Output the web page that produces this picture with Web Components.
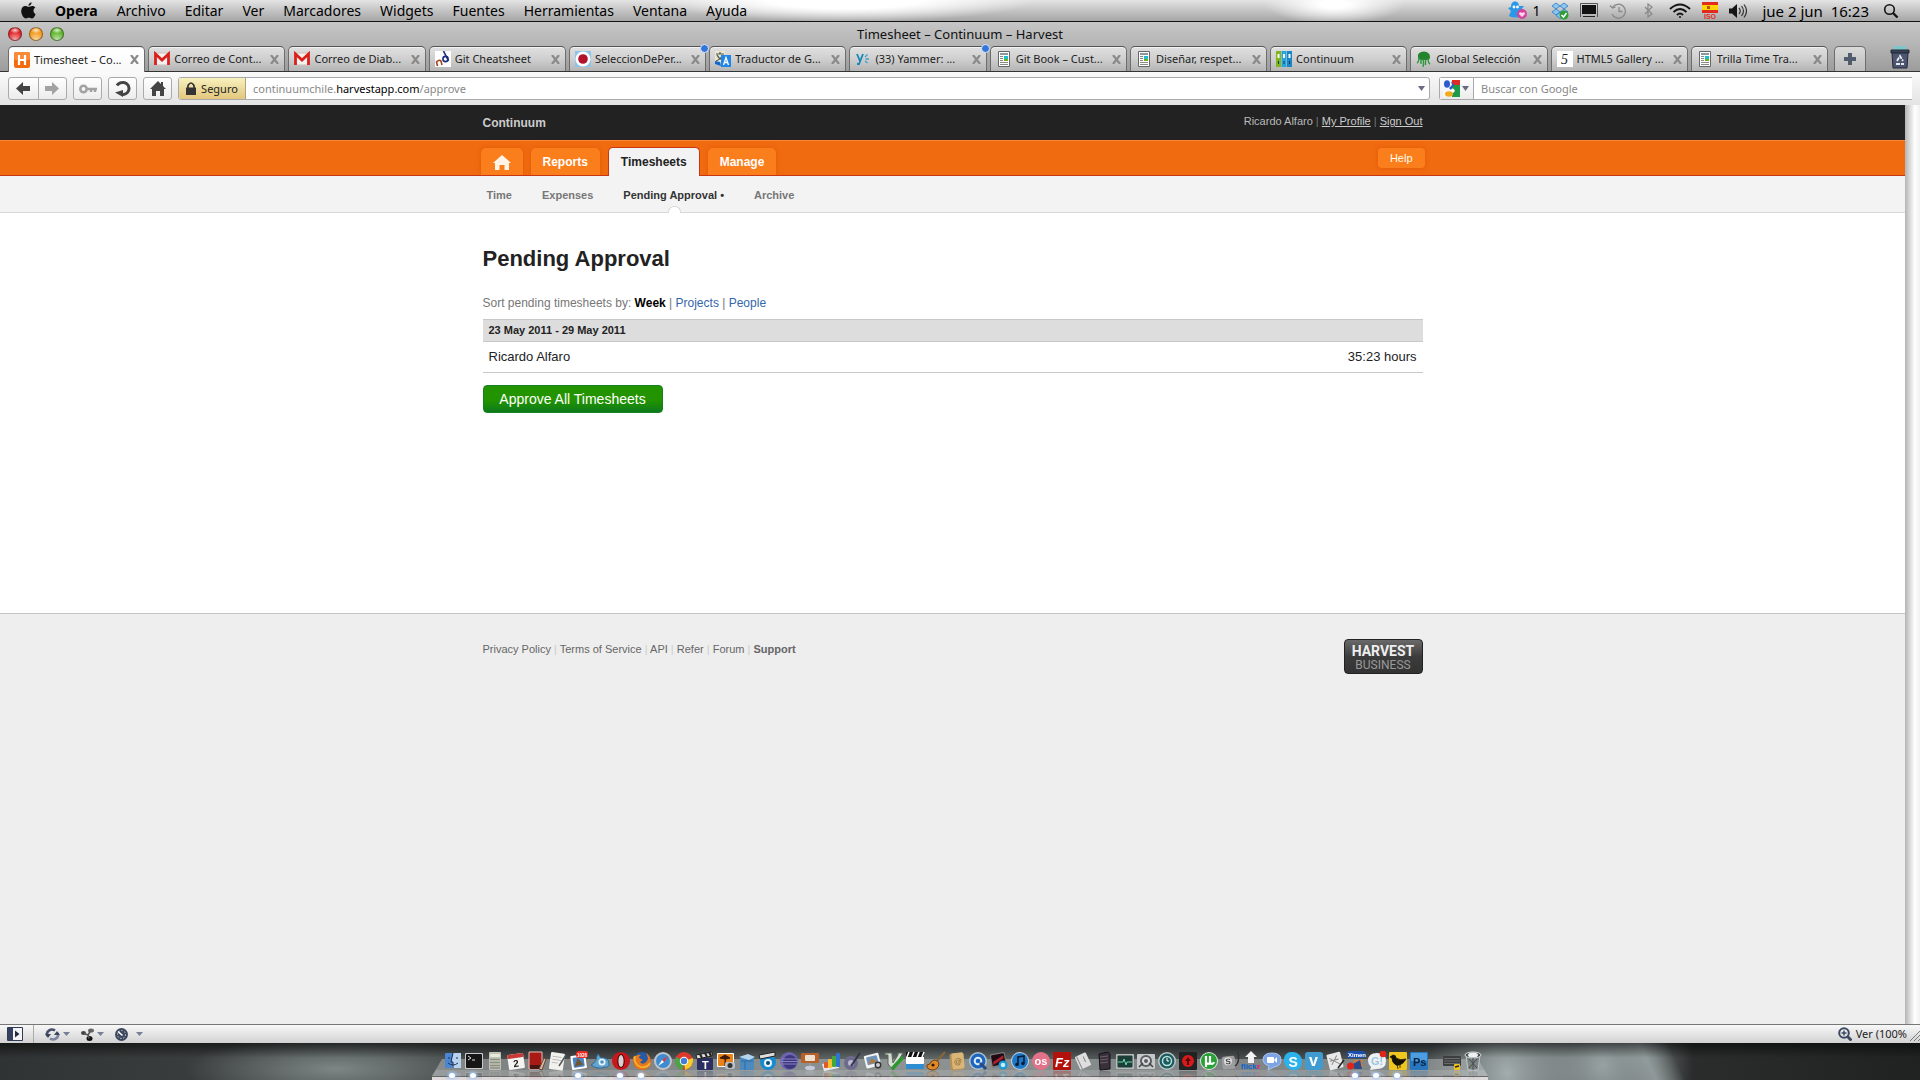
<!DOCTYPE html>
<html lang="es">
<head>
<meta charset="utf-8">
<title>Timesheet – Continuum – Harvest</title>
<style>
html,body{margin:0;height:100%}
body{display:flex;flex-direction:column;overflow:hidden;background:#1d1f1f;font-family:"Noto Sans","Open Sans",sans-serif}
mac-dock,mac-menubar{flex:none}
browser-window{flex:1;min-height:0}
</style>
</head>
<body>
<mac-menubar></mac-menubar>
<browser-window>
  <window-titlebar slot="chrome">Timesheet – Continuum – Harvest</window-titlebar>
  <browser-tabs slot="chrome">
    <browser-tab icon="harvest" active>Timesheet – Co...</browser-tab>
    <browser-tab icon="gmail">Correo de Cont...</browser-tab>
    <browser-tab icon="gmail">Correo de Diab...</browser-tab>
    <browser-tab icon="nd">Git Cheatsheet</browser-tab>
    <browser-tab icon="target" unread>SeleccionDePer...</browser-tab>
    <browser-tab icon="translate">Traductor de G...</browser-tab>
    <browser-tab icon="yammer" unread>(33) Yammer: ...</browser-tab>
    <browser-tab icon="page">Git Book – Cust...</browser-tab>
    <browser-tab icon="page">Diseñar, respet...</browser-tab>
    <browser-tab icon="binders">Continuum</browser-tab>
    <browser-tab icon="tree">Global Selección</browser-tab>
    <browser-tab icon="five">HTML5 Gallery ...</browser-tab>
    <browser-tab icon="page">Trilla Time Tra...</browser-tab>
  </browser-tabs>
  <browser-toolbar slot="chrome"></browser-toolbar>
  <harvest-header></harvest-header>
  <harvest-subnav></harvest-subnav>
  <timesheet-approval></timesheet-approval>
  <harvest-footer></harvest-footer>
  <status-bar slot="status"></status-bar>
</browser-window>
<mac-dock></mac-dock>

<script>
const define = (name, html, setup) => customElements.define(name, class extends HTMLElement {
  connectedCallback() {
    if (this.shadowRoot) return;
    const root = this.attachShadow({mode: 'open'});
    root.innerHTML = '<style>:host,*{box-sizing:border-box}svg{display:block}button{font:inherit;margin:0;padding:0;border:0;background:none;color:inherit}a{color:inherit;text-decoration:none}</style>' + html;
    if (setup) setup(this, root);
  }
});

/* ---------- menu bar ---------- */
define('mac-menubar', `
<style>
:host{display:flex;align-items:center;justify-content:space-between;height:22px;padding:0 20px 0 21px;font-size:14px;line-height:20px;color:#000;border-bottom:1px solid #111;
background:radial-gradient(ellipse 190px 22px at 44% 0,#fff 40%,transparent),radial-gradient(ellipse 70px 20px at 69.5% 20%,#fff 20%,transparent),linear-gradient(#e4e4e4,#c4c4c4 50%,#a6a6a6)}
nav,div{display:flex;align-items:center}
nav{gap:19px}
b{font-weight:700}
div{gap:11px}
.n{display:flex;gap:4px;align-items:center}
time{white-space:pre;font-size:15px;padding-left:4px}
</style>
<nav>
<svg width="15" height="17" viewBox="0 0 15 17"><path d="M10.600.2c.1 1.700-1.300 3.500-3.100 3.600C7.300 2.100 8.900.4 10.600.2zM14.600 12.200c-.8 2.200-2.200 4.300-3.800 4.300-1.100 0-1.600-.7-2.900-.7-1.300 0-1.800.7-2.900.7C2.500 16.500.2 12.400.2 9 .2 5.900 2.200 4 4.400 4c1.300 0 2.300.8 3.200.8.900 0 2.100-.9 3.700-.9 1.200 0 2.400.6 3.100 1.700-2.800 1.700-2.300 5.400.2 6.600z" fill="#111"/></svg>
<b>Opera</b><span>Archivo</span><span>Editar</span><span>Ver</span><span>Marcadores</span><span>Widgets</span><span>Fuentes</span><span>Herramientas</span><span>Ventana</span><span>Ayuda</span>
</nav>
<div>
<span class="n"><svg width="20" height="19" viewBox="0 0 20 19"><path d="M7 .5C10 .5 11 3 11 5l5 0-3 4 4 6c-4 2-12 2-16 0l2-5-3-3 3-1c0-3 1-5.500 4-5.500z" fill="#2a97e8"/><circle cx="6" cy="6" r="1.400" fill="#fff"/><circle cx="9.500" cy="6" r="1.400" fill="#fff"/><circle cx="14" cy="13" r="5" fill="#d3459b"/><path d="M14 16l-3-3c0-2 2-2 3-1 1-1 3-1 3 1z" fill="#ffd6ec"/></svg>1</span>
<svg width="18" height="18" viewBox="0 0 18 18"><path d="M5 1l4 3-4 3-4-3zM13 1l4 3-4 3-4-3zM5 7l4 3-4 3-4-3zM13 7l4 3-4 3-4-3zM9 10.500l4 3-4 3-4-3z" fill="#8cc6f2" stroke="#2e7cc0" stroke-width=".8"/><circle cx="13" cy="13" r="4.500" fill="#2f9e35"/><path d="M10.500 13l2 2 3-4" stroke="#fff" stroke-width="1.500" fill="none"/></svg>
<svg width="18" height="15" viewBox="0 0 18 15"><path d="M.5 14V.500h17V14" fill="none" stroke="#555"/><rect x="2" y="2" width="14" height="9" fill="#111"/><path d="M3 13.500h12" stroke="#222"/></svg>
<svg width="18" height="16" viewBox="0 0 18 16" fill="none" stroke="#888" stroke-width="1.300"><path d="M3.500 4.500A7 7 0 1 1 3 11"/><path d="M10 4v4.500h3.500M1 2.500l2.500 2.500L6.500 4"/></svg>
<svg width="20" height="15" viewBox="0 0 20 15" fill="none" stroke="#888" stroke-width="1.200"><path d="M7 4l7 7-4 3V1l4 3-7 7"/></svg>
<svg width="22" height="16" viewBox="0 0 22 16" fill="none" stroke="#151515" stroke-width="2"><path d="M1 6q10-9 20 0M4.500 9q6.500-6 13 0M8 12q3-3 6 0"/><circle cx="11" cy="14" r="1" fill="#151515" stroke="none"/></svg>
<svg width="16" height="18" viewBox="0 0 16 18"><path fill="#e22b1c" d="M0 0h16v11H0z"/><path fill="#ffd400" d="M0 3h16v5H0z"/><path fill="#b4551d" d="M5 4h3v3H5z"/><text x="2" y="17" font-size="7" font-weight="700" font-family="Liberation Sans" fill="#e22b1c">ISO</text></svg>
<svg width="18" height="14" viewBox="0 0 18 14"><path d="M0 4.500h3L8 0v14L3 9.500H0z" fill="#151515"/><path d="M10 4q2.500 3 0 6M12.500 2q4 5 0 10M15 .5q5 6.500 0 13" fill="none" stroke="#333" stroke-width="1.200"/></svg>
<time>jue 2 jun  16:23</time>
<svg width="20" height="16" viewBox="0 0 20 16" fill="none" stroke="#151515" stroke-width="1.600"><circle cx="9.500" cy="6.500" r="4.800"/><path d="M13 10l4.500 4.500" stroke-width="2.400"/></svg>
</div>`);

/* ---------- window shell ---------- */
define('browser-window', `
<style>
:host{display:flex;flex-direction:column;background:#c3c3c3}
.view{flex:1;display:flex;min-height:0}
main{flex:1;display:flex;flex-direction:column;min-width:0;background:#eee;font-family:"Liberation Sans",Arial,sans-serif}
.gutter{width:15px;background:linear-gradient(90deg,#b4b4b4,#e8e8e8 45%,#fff 65%,#f0f0f0)}
::slotted(harvest-footer){flex:1}
</style>
<slot name="chrome"></slot>
<div class="view"><main><slot></slot></main><div class="gutter"></div></div>
<slot name="status"></slot>`);

define('window-titlebar', `
<style>
:host{display:grid;grid-template-columns:1fr auto 1fr;align-items:center;height:24px;padding:0 8px;font-size:13px;line-height:20px;color:#111;background:linear-gradient(#c6c6c6,#b4b4b4)}
div{display:flex;gap:7px}
button{width:14px;height:14px;border-radius:50%;border:1px solid #0006;background:radial-gradient(circle at 50% 95%,#fff9,transparent 60%),radial-gradient(ellipse 5px 3px at 50% 20%,#fffc,transparent),var(--c)}
</style>
<div><button style="--c:#e0262a" aria-label="Cerrar"></button><button style="--c:#f39a1d" aria-label="Minimizar"></button><button style="--c:#5fb52c" aria-label="Ampliar"></button></div>
<span><slot></slot></span>`);

const favicons = {
harvest:'<rect width="16" height="16" rx="2" fill="#f26c0d"/><rect width="16" height="8" rx="2" fill="#f98a36"/><path d="M5 3v10M11 3v10M5 8h6" stroke="#fff" stroke-width="2.200"/>',
gmail:'<path d="M0 2h16v12H0z" fill="#f4f1ef" stroke="#c9c0bd"/><path d="M1.500 14V3L8 9l6.500-6v11" fill="none" stroke="#d8201c" stroke-width="2.800"/>',
nd:'<path d="M0 0h16v16H0z" fill="#fff"/><path d="M2.500 15L1.500 11q3-3 4.500-1l1 4" fill="none" stroke="#a3431d" stroke-width="1.600"/><circle cx="10.500" cy="8" r="2.600" fill="none" stroke="#1c2f7c" stroke-width="1.600"/><path d="M8.500 0l5 10" stroke="#1c2f7c" stroke-width="1.600"/>',
target:'<path d="M0 0h16v16H0z" fill="#8fc4e8"/><circle cx="8" cy="8" r="7.500" fill="#fff"/><circle cx="8" cy="8" r="4.800" fill="#b1142a"/>',
translate:'<path d="M0 0h10v11H0z" fill="#ece6cf"/><path d="M1 3h8M5 1v2M8 4Q6 8 1 10M2 4q2 4 6 5" stroke="#4c5a55" stroke-width="1.200" fill="none"/><path d="M6 4h10v12H6z" fill="#1e86e6"/><path d="M8.500 14L11 6.500 13.500 14M9.500 11.500h3" stroke="#fff" stroke-width="1.300" fill="none"/><path d="M0 10l5 1 1 4-6-2z" fill="#1267c9"/>',
yammer:'<path d="M2 3l3 7M8 3L4 13H2" stroke="#1787b5" stroke-width="1.800" fill="none"/><path d="M10 6l2.500-2.500M10.500 8H14M10 10l2.500 2" stroke="#3aa2cc" stroke-width="1.300"/>',
page:'<path d="M2.500.500h11v15h-11z" fill="#fff" stroke="#666"/><path d="M4 2h8v2H4z" fill="#8b9a9c"/><path d="M8 5h4v3H8z" fill="#1bbdd0"/><path d="M8 8h4v2H8z" fill="#74b11f"/><path d="M4 5.500h3M4 7.500h3M4 9.500h3M4 11.500h8M4 13.500h8" stroke="#888"/>',
binders:'<path d="M0 0h5v16H0z" fill="#7fb51e"/><path d="M5.500 0h5v16h-5z" fill="#27a4dc"/><path d="M11 0h5v16h-5z" fill="#1a86c6"/><path d="M1.500 3h2v4h-2zM7 3h2v4H7zM12.500 3h2v4h-2z" fill="#fff"/><path d="M2.500 10v3M8 10v3M13.500 10v3" stroke="#0c3f66"/>',
tree:'<path d="M2 6q-1-5 6-5.500Q14 1 14 6q0 3-3 3H6Q2 9 2 6z" fill="#24842d"/><path d="M3 6q0 5-2 6M7 8q1 5 0 8M12 7q0 5 2 6M5 8v5M9.500 8v6" stroke="#2d9438" stroke-width="1.400" fill="none"/>',
five:'<path d="M0 0h16v16H0z" fill="#fff"/><text x="4" y="13" font-size="14" font-style="italic" font-family="Liberation Serif" fill="#222">5</text>'
};

define('browser-tabs', `
<style>
:host{display:flex;height:26px;padding:0 8px;background:linear-gradient(#b4b4b4,#9c9c9c);font-size:11px;border-bottom:1px solid #333}
.tabs{flex:1;display:flex;gap:3px;min-width:0}
.plus{display:grid;place-items:center;width:32px;height:25px;margin-left:6px;border:1px solid #6d6d6d;border-bottom:0;border-radius:5px 5px 0 0;background:linear-gradient(#dadada,#bcbcbc)}
.bin{width:46px;display:flex;justify-content:flex-end}
</style>
<div class="tabs"><slot></slot></div>
<button class="plus" aria-label="Nueva pestaña"><svg width="12" height="12"><path d="M6 0v12M0 6h12" stroke="#505b6d" stroke-width="4"/></svg></button>
<button class="bin" aria-label="Papelera"><svg width="22" height="23" viewBox="0 0 22 23"><path d="M4 0h12v4H4z" fill="#7fc6cb"/><path d="M1 4h18v3H1z" fill="#3a4257" stroke="#222a3b"/><path d="M2 7h16l-1 15H3z" fill="#4d566e" stroke="#222a3b"/><path d="M7 15l3-5 3 5M6 18h8" stroke="#e8edf5" stroke-width="1.800" fill="none" stroke-dasharray="4 1"/></svg></button>`);

define('browser-tab', `
<style>
:host{flex:1 1 0;min-width:0;position:relative;display:flex;align-items:center;gap:4px;height:25px;padding:0 5px;color:#222;border:1px solid #6d6d6d;border-top-color:#555;border-bottom:0;border-radius:5px 5px 0 0;background:linear-gradient(#e0e0e0,#cfcfcf 50%,#b4b4b4);box-shadow:inset 0 1px #f2f2f2}
:host([active]){background:linear-gradient(#fff,#f8f8f8);height:26px}
svg{flex:none}
span{flex:1;white-space:nowrap;line-height:16px}
i{display:none;position:absolute;right:-4px;top:-3px;width:9px;height:9px;border-radius:50%;border:1px solid #dfe9f8;background:#3475dc}
:host([unread]) i{display:block}
</style>
<svg class="fav" width="16" height="16" viewBox="0 0 16 16"></svg><span><slot></slot></span>
<button aria-label="Cerrar pestaña"><svg width="9" height="9"><path d="M1 0l7 9M8 0L1 9" stroke="#8a8a8a" stroke-width="2.200"/></svg></button><i></i>`,
(host, root) => { root.querySelector('.fav').innerHTML = favicons[host.getAttribute('icon')]; });

define('browser-toolbar', `
<style>
:host{display:flex;align-items:center;height:33px;padding:0 8px;font-size:11px;color:#222;background:linear-gradient(#fafafa,#e3e3e3)}
button{display:grid;place-items:center;width:29px;height:23px;border:1px solid #aaa;border-radius:3px;background:linear-gradient(#fff,#ececec)}
.b{margin-right:6px}
.back{border-radius:3px 0 0 3px;width:31px;margin-right:-1px}
.fwd{border-radius:0 3px 3px 0}
.field{display:flex;align-items:center;height:23px;border:1px solid #a9a9a9;background:#fff}
.url{flex:1;border-radius:3px}
.secure{display:flex;gap:5px;width:67px;height:21px;border:0;border-right:1px solid #b0a477;border-radius:2px 0 0 2px;background:linear-gradient(#f7f1bd,#e3c67d);align-items:center;justify-content:center}
.addr{padding-left:7px;color:#888;white-space:nowrap}
.addr b{font-weight:400;color:#000}
input{flex:1;min-width:0;border:0;outline:0;padding:0 7px;height:19px;font:inherit;background:none}
input::placeholder{color:#888;opacity:1}
.search{width:473px;margin-left:9px;border-right:0;border-radius:3px 0 0 3px}
.engine{display:flex;gap:2px;justify-content:center;align-items:center;width:34px;height:21px;border:0;border-right:1px solid #aaa;border-radius:0;background:linear-gradient(#fff,#ececec)}
</style>
<button class="back" aria-label="Atrás"><svg width="15" height="13"><path d="M0 6.500L7 0v4h7v5H7v4z" fill="#444"/></svg></button>
<button class="fwd b" aria-label="Adelante"><svg width="15" height="13"><path d="M14 6.500L7 0v4H0v5h7v4z" fill="#a2a2a2"/></svg></button>
<button class="b" aria-label="Contraseñas"><svg width="18" height="10" fill="none" stroke="#a2a2a2" stroke-width="2.500"><circle cx="4.500" cy="5" r="3.200"/><path d="M8 5h10M12 5v3M16 5v3"/></svg></button>
<button class="b" aria-label="Recargar"><svg width="17" height="16"><path d="M3 4.500q2-3 5.500-3a6 6 0 0 1 1 12H8" fill="none" stroke="#444" stroke-width="3"/><path d="M9 16V9L1 11.500z" fill="#444"/></svg></button>
<button class="b" aria-label="Inicio"><svg width="16" height="15"><path d="M8 0l3 3V1h2v4l3 3h-2v7h-4v-5H6v5H2V8H0z" fill="#444"/></svg></button>
<label class="field url"><span class="secure"><svg width="10" height="13"><path d="M0 5.500h10V13H0z" fill="#333"/><path d="M2 6V3.500q3-5 6 0V6" fill="none" stroke="#333" stroke-width="1.700"/></svg>Seguro</span><span class="addr">continuumchile.<b>harvestapp.com</b>/approve</span><input aria-label="Dirección"><svg width="14" height="5"><path d="M3 0h7L6.500 5z" fill="#6a6a82"/></svg></label>
<label class="field search"><span class="engine"><svg width="17" height="17" viewBox="0 0 17 17"><path d="M9 0h8v17H9z" fill="#1d9b4a"/><path d="M9 0h8v5H9z" fill="#dd2b26"/><path d="M0 0h9v17H0z" fill="#f5f7fc"/><ellipse cx="4" cy="4" rx="3" ry="3.800" fill="#2c5bd0"/><path d="M6 9q5-2 6 2l-3 3z" fill="#fff"/><ellipse cx="6" cy="14" rx="4" ry="2.700" fill="#f2aa1d"/><path d="M8 1l3 4-3 5-2-2 3-3z" fill="#2c5bd0"/></svg><svg width="8" height="5"><path d="M0 0h7L3.500 5z" fill="#6a6a82"/></svg></span><input placeholder="Buscar con Google" aria-label="Buscar con Google"></label>`);

/* ---------- Harvest pages ---------- */
define('harvest-header', `
<style>
:host{display:block;font-size:12px}
.top{background:#222;color:#ccc}
.in{width:944px;max-width:100%;margin:0 auto;display:flex;justify-content:space-between}
.top .in{height:35px;padding:0 2px}
.top b{line-height:36px}
.top span{font-size:11px;line-height:33px;color:#777}
.top span em{font-style:normal;color:#bbb}
.top a{color:#ccc;text-decoration:underline}
.bar{height:36px;background:#f06a10;border-top:1px solid #fb8634;border-bottom:1px solid #c83712}
nav{display:flex;align-items:flex-end;gap:8px;height:35px}
nav a{display:flex;align-items:center;height:28px;padding:0 12px;color:#fff;font-weight:700;background:#fb7e1d;border-radius:5px 5px 0 0;box-shadow:0 0 4px #dd5200aa;clip-path:inset(-5px -5px 1px -5px)}
nav a.on{height:29px;color:#222;background:#f3f3f3;border:1px solid #c83712;border-bottom:0;box-shadow:none;clip-path:none}
.help{height:20px;margin-top:7px;padding:0 12px;font-size:11px;line-height:20px;color:#ffe;background:#fb7e1d;border-radius:4px;box-shadow:0 0 4px #dd5200aa}
</style>
<div class="top"><div class="in"><b>Continuum</b><span><em>Ricardo Alfaro</em> | <a href="#">My Profile</a> | <a href="#">Sign Out</a></span></div></div>
<div class="bar"><div class="in"><nav><a href="#" aria-label="Home"><svg width="18" height="15"><path d="M9 0l9 8h-2v7h-4.500v-5h-5v5H2V8H0z" fill="#fff4e6"/></svg></a><a href="#">Reports</a><a href="#" class="on">Timesheets</a><a href="#">Manage</a></nav><a class="help" href="#">Help</a></div></div>`);

define('harvest-subnav', `
<style>
:host{display:block;background:#f3f3f3;border-bottom:1px solid #d8d8d8}
nav{display:flex;gap:30px;width:940px;max-width:100%;margin:0 auto;padding-left:4px;font-size:11px;font-weight:700;line-height:38px;height:36px;color:#777}
.on{position:relative;height:36px;color:#333}
.on::after{content:"";position:absolute;left:50%;bottom:-1px;margin-left:-6px;width:11px;height:6px;background:#fff;border:1px solid #d8d8d8;border-bottom:0;border-radius:6px 6px 0 0}
</style>
<nav><a href="#">Time</a><a href="#">Expenses</a><a href="#" class="on">Pending Approval •</a><a href="#">Archive</a></nav>`);

define('timesheet-approval', `
<style>
:host{display:block;min-height:400px;background:#fff;color:#222}
section{width:940px;max-width:100%;margin:0 auto;padding-top:32px}
h1{margin:0;font-size:22px;line-height:28px}
p{margin:22px 0 8px;font-size:12px;line-height:16px;color:#777}
p b{color:#000}
p a{color:#36a;}
table{width:100%;border-collapse:collapse;font-size:13px}
th{height:22px;padding:0 6px 2px;text-align:left;font-size:11px;background:#ddd;border:solid #c8c8c8;border-width:1px 0}
td{height:31px;padding:0 6px 2px;border-bottom:1px solid #c8c8c8}
td+td{text-align:right}
button{margin-top:12px;width:180px;height:28px;font-size:14px;line-height:25px;color:#fff;border:1px solid #178021;border-radius:4px;background:linear-gradient(#239400 55%,#0c7a1c)}
</style>
<section>
<h1>Pending Approval</h1>
<p>Sort pending timesheets by: <b>Week</b> | <a href="#">Projects</a> | <a href="#">People</a></p>
<table><thead><tr><th colspan="2">23 May 2011 - 29 May 2011</th></tr></thead><tbody><tr><td>Ricardo Alfaro</td><td>35:23 hours</td></tr></tbody></table>
<button>Approve All Timesheets</button>
</section>`);

define('harvest-footer', `
<style>
:host{display:block;background:#eee;border-top:1px solid #c4c4c4;color:#666}
footer{display:flex;justify-content:space-between;width:940px;max-width:100%;margin:0 auto;padding-top:25px;font-size:11px}
nav{line-height:20px;color:#ccc}
nav a{color:#666}
.badge{width:79px;height:35px;padding-top:4px;border:1px solid #222;border-radius:4px;background:linear-gradient(#6a6a6a,#3c3c3c 50%,#333);text-align:center}
.badge b{display:block;font:700 14px/15px Roboto,"Liberation Sans",sans-serif;color:#eee}
.badge span{display:block;font:12px/12px Roboto,"Liberation Sans",sans-serif;color:#999}
</style>
<footer><nav><a href="#">Privacy Policy</a> | <a href="#">Terms of Service</a> | <a href="#">API</a> | <a href="#">Refer</a> | <a href="#">Forum</a> | <a href="#"><b>Support</b></a></nav>
<div class="badge"><b>HARVEST</b><span>BUSINESS</span></div></footer>`);

define('status-bar', `
<style>
:host{display:flex;align-items:center;justify-content:space-between;height:19px;padding-left:7px;border-top:1px solid #777;background:linear-gradient(#f8f8f8,#d2d2d2);font-size:11px;line-height:16px;color:#222}
div{display:flex;align-items:center}
.sep{width:1px;height:18px;background:#aaa;margin:0 11px 0 10px}
button{display:flex;align-items:center;gap:3px;margin-right:11px}
.zoom{gap:4px;margin:0 3px 0 0;white-space:nowrap}
.zoom svg{flex:none}
</style>
<div><button style="margin:0" aria-label="Paneles"><svg width="16" height="14"><path d="M.500.500h15v13H.500z" fill="#f4f4f8" stroke="#2f3b57"/><path d="M1 1h5v12H1z" fill="#37415f"/><path d="M8 3.500L12.500 7 8 10.500z" fill="#222b42"/></svg></button><span class="sep"></span>
<button aria-label="Sincronizar"><svg width="15" height="13" fill="none" stroke="#46506a" stroke-width="2.600"><path d="M2.500 8A5 4.500 0 0 1 10 2.500"/><path d="M12.500 5A5 4.500 0 0 1 5 10.500" stroke="#7c86a0"/><path d="M0 6h6L3 10zM9 7h6l-3-4z" fill="#3a445c" stroke="none"/></svg><svg width="7" height="4"><path d="M0 0h7L3.500 4z" fill="#758098"/></svg></button>
<button aria-label="Unite"><svg width="13" height="13"><ellipse cx="2.500" cy="5" rx="2.500" ry="2" fill="#444"/><ellipse cx="10" cy="2.500" rx="3" ry="2" fill="#666"/><ellipse cx="8.500" cy="10.500" rx="3" ry="2.500" fill="#111"/><path d="M3 5.500l4 1.500 2.500-4M7 6.500l1 4" stroke="#555" stroke-width="1.600" fill="none"/></svg><svg width="7" height="4"><path d="M0 0h7L3.500 4z" fill="#758098"/></svg></button>
<button style="gap:8px" aria-label="Turbo"><svg width="13" height="13"><circle cx="6.500" cy="6.500" r="6.500" fill="#3c475e"/><circle cx="6.500" cy="6.500" r="4" fill="none" stroke="#cbd2de" stroke-dasharray="1.500 1.500"/><path d="M3 3.500l4.500 4" stroke="#fff" stroke-width="1.600"/></svg><svg width="7" height="4"><path d="M0 0h7L3.500 4z" fill="#758098"/></svg></button></div>
<div><button class="zoom"><svg width="14" height="14" fill="none" stroke="#3d4863" stroke-width="2"><circle cx="6" cy="6" r="4.800"/><path d="M6 3.500v5M3.500 6h5" stroke-width="1.500"/><path d="M9.500 9.500l4 4" stroke-width="3"/></svg>Ver (100%</button><svg width="10" height="16" stroke="#777"><path d="M0 15L10 5M4 15l6-6M8 15l2-2"/></svg></div>`);

/* ---------- dock ---------- */
const R = (f, x=1, y=1, w=18, h=18, r=1) => `<rect x="${x}" y="${y}" width="${w}" height="${h}" rx="${r}" fill="${f}"/>`;
const C = (f, x=10, y=10, r=9) => `<circle cx="${x}" cy="${y}" r="${r}" fill="${f}"/>`;
const P = (d, f='none', s='none', w=1) => `<path d="${d}" fill="${f}" stroke="${s}" stroke-width="${w}"/>`;
const T = (t, x, y, s, f='#fff', e='') => `<text x="${x}" y="${y}" font-size="${s}" fill="${f}" font-family="Liberation Sans" font-weight="700" ${e}>${t}</text>`;
const dock = [
 ['Finder*', R('#4d86d0',2,2,16,15)+P('M10 2h8v15h-9l1-6H8z','#b9d2ee')+P('M6 6v2M14 6v2M5 12q5 4 10 0M10 2L8 11h2v6','none','#15305c')],
 ['Terminal*', R('#c9c9c9',1,2,18,16)+R('#161616',2,3,16,14)+P('M4 5l3 2-3 2M8 9h3','none','#ddd')],
 ['Calculadora', R('#c2c3b8',4,1,12,18)+R('#e5ebd8',5,3,10,3)+P('M5 8.500h10M5 11.500h10M5 14.500h10M5 17h10','none','#8c8e80',1.6)],
 ['iCal', `<g transform="rotate(-8 10 10)">${R('#f4f4f2',2,3,16,15)+R('#c93a36',2,3,16,4)+T('2',7,16,10,'#222')}</g>`],
 ['Photo Booth', P('M2 1h13v17H2z','#a91a14','#e5c0ba')+P('M3 14h11v4H3z','#471512')+P('M12 18l5-11 2 1-4 11z','#d9b7a0','#62443a')],
 ['TextEdit', `<g transform="rotate(8 10 10)">${R('#f1f1ed',2,2,14,17)+P('M4 6h9M4 9h9M4 12h6','none','#bbb')}</g>`+P('M18 4l-7 11','none','#555',1.5)],
 ['Mail*', `<g transform="rotate(-8 10 10)">${R('#fff',2,4,15,14)+R('#4b82bf',4,6,11,10)+P('M5 15l4-8 5 7z','#6e5636')}</g>`+R('#ee2a20',7,0,12,7,3)+T('1026',8,6,4.5)],
 ['MAMP', P('M1 14q3-1 5-5 1-5 2-6l3 4q8-1 8 6 0 4-4 3-7 3-14-2z','#63a5cf','#2d6d9b')+C('#e8f4fb',12,11,3.5)+C('#4d93c2',12,11,1.8)],
 ['Opera*', C('#c9171b')+'<ellipse cx="10" cy="10" rx="3.700" ry="7" fill="#4c0c0f"/><ellipse cx="10" cy="10" rx="2.600" ry="6" fill="#d9d0d0"/>'],
 ['Firefox*', C('#245aa8')+P('M1 6Q0 19 11 19q8-1 8-9-1-6-5-8 3 5 1 8-4 5-7 1l3-2-4-2q0-2 2-3-3-1-5 1z','#e77718')+P('M3 5q-2 8 6 11 6 1 9-4','none','#f7b733',1.5)],
 ['Safari', C('#bfc5ca')+C('#3d8bd0',10,10,7)+P('M15 5l-4 6-2-2z','#e33')+P('M5 15l4-6 2 2z','#fff')],
 ['Chrome', C('#dd3a2c')+P('M10 10L2 6q-3 6 2 11 3 2 5 2z','#4ba446')+P('M10 10l9-3q1 9-8 12z','#f8cd2b')+C('#fff',10,10,4.2)+C('#3f7ed5',10,10,3.2)],
 ['MovieText', R('#2a2e61',2,7,16,12)+P('M1 4l16-3v4L2 8z','#ddd','#222')+P('M5 3l2 4M10 2l2 4M14 1l2 4','none','#222',2)+T('T',7,18,11)],
 ['iPhoto', R('#fff',1,2,17,14)+R('#e98218',2,3,15,12)+P('M9 15V8L4 7l5-3 5 3-4 1','#3c1b08','#3c1b08')+R('#b7bec6',9,11,10,7,2)+C('#333',14,14.5,2.5)],
 ['Xcode', R('#4a8ac1',3,7,14,12)+P('M2 6l9-3 7 3-6 3z','#b3d6ef')+P('M4 10h12M8 10v9','none','#2f6ca2')],
 ['DVD', C('#168bd2',10,11,8)+P('M1 4l16-3v4L2 8z','#ddd','#222')+C('#e9f5fc',10,12,4)+C('#0b4a77',10,12,2)],
 ['Eclipse', C('#6b64ae')+C('#3d3780',11,11,7)+P('M2 8h16M1.500 10.500h17M2 13h16','none','#8a84c0')],
 ['Keynote', R('#b7612a',1,2,18,10)+R('#ece0d2',5,4,10,6)+P('M10 12v4','none','#999',2)+'<ellipse cx="10" cy="17" rx="5" ry="2.200" fill="#c4c9da"/>'],
 ['Numbers', P('M1 13l17-3v7L3 20z','#e8e8e8')+R('#e3582a',3,11,4,6)+R('#f2c230',7,8,4,9)+R('#43a83c',11,5,4,11)+R('#2f75cf',15,2,4,14)],
 ['iMovie', C('#6d6a8d',9,12,7)+C('#b9b8ce',9,12,3)+P('M18 2L9 15','none','#33334c',2)],
 ['Preview', `<g transform="rotate(-14 10 10)">${R('#f3f3f3',2,3,15,13)+R('#6f94ba',4,5,11,8)+P('M5 12l4-5 5 5z','#ad7a45')}</g>`+C('#333',15,14,3.4)+C('#ccd',15,14,2)],
 ['MacVim', P('M1 2h7v2L9 12l5-8V2h5L9 19 4 13V4H1z','#d8dcd8','#596b58')+P('M19 6L8 18','none','#2e962e',3.5)],
 ['Clapper', R('#fff',1,2,18,11)+R('#111',1,1,18,5)+P('M4 1L2 6M9 1L7 6M14 1l-2 5M19 1l-2 5','none','#fff',1.5)+R('#2f8ed1',1,13,18,5)],
 ['GarageBand', P('M19 1L9 12','none','#8a6539',2)+P('M9 9q4 1 4 4-1 6-7 6-6-1-5-5 3 0 4-3 2-2 4-2z','#e08a2a','#723c0c')+C('#301b0a',7,14,1.6)],
 ['Agenda', `<g transform="rotate(-5 10 10)">${R('#b89056',3,2,14,17,2)+R('#d9b678',5,2,12,16,2)+T('@',7,13,8,'#8b632b')}</g>`],
 ['QuickTime', C('#b0c0d0')+C('#1a65bd',10,10,7.5)+C('#dcebf8',10,10,4.3)+C('#1a65bd',10,10,2.3)+P('M12 12l6 6','none','#244a86',3)],
 ['Screenflow', `<g transform="rotate(-10 10 10)">${R('#7a7c82',2,2,15,14)+R('#210b10',3,3,13,11)+P('M4 10l11-5v3L4 13z','#a82332')}</g>`+C('#159bd6',14,14,4.5)+C('#c8ecfa',14,14,2.3)],
 ['iTunes', C('#c2d3df')+C('#1f78c6',10,10,8)+P('M8 13V6l6-1v7','none','#0c1e36',1.6)+C('#0c1e36',7,13.5,1.8)+C('#0c1e36',13,12.5,1.8)],
 ['Last.fm', C('#e2728a')+T('os',3.5,14,11)],
 ['FileZilla', R('#b3120c')+T('Fz',3,16,13,'#fff','font-style="italic"')],
 ['Libro', `<g transform="rotate(-25 10 10)">${R('#dedede',4,3,12,14)+P('M6 3v14M12 6v6','none','#888')}</g>`],
 ['Torre', P('M5 3l9-2 2 2v15l-10 1z','#39303c','#15121a')+P('M6 6l8-1M6 9l8-1M6 12l8-1','none','#70606b')],
 ['Monitor', R('#b9bdb9',1,3,18,15)+R('#1b3f38',2.5,4.5,15,12)+P('M3 11h5l1-3 2 6 1-3h5','none','#6fd6a8')],
 ['Utilidades', R('#c5c8c8',1,3,18,15)+C('#5b5e60',10,10,6)+C('#d9dbdb',10,10,4)+C('#5b5e60',10,10,2)+P('M3 16l4-4M17 16l-4-4','none','#444',1.5)],
 ['Time Machine', C('#b9c6c6')+C('#1d5a5d',10,10,7.5)+'<circle cx="10" cy="10" r="4.500" fill="none" stroke="#b7e2dc" stroke-width="1.500"/>'+P('M10 7v3h2','none','#fff')],
 ['Transmit', R('#222')+C('#d81a1a',10,10,6)+P('M10 6l3 4h-2v4H9v-4H7z','#54090a')],
 ['uTorrent', C('#dfe9df')+C('#28a036',10,10,8)+P('M7 5v6q1 3 4 1V5M11 12q3 2 4-1M7 11v5','none','#fff',2.2)],
 ['Disco', `<g transform="rotate(-6 10 10)">${R('#9d9d9d',2,5,13,13,2)+C('#ddd',8,10,4)+T('S',5.5,13,8,'#444')}</g>`+P('M15 15q5-3 3-14','none','#333',1.5)],
 ['Flickr', P('M10 0l6 6h-3v6H7V6H4z','#f2f2f2')+T('flick',0,18,8,'#0b63d6')+T('r',16,18,8,'#ff0a84')],
 ['iChat', P('M10 2q9 0 9 7 0 6-7 7l-6 3 1-4q-6-2-6-6 0-7 9-7z','#7ca4e4','#a9c4f1')+R('#fff',5,6,7,6,1)+P('M12 9l3-3v6z','#fff')],
 ['Skype', C('#2bb2ec',8,8,7)+C('#2bb2ec',12,12,7)+C('#2bb2ec')+T('S',5.5,15.5,14)],
 ['Vimeo', R('#3f9bd0',1,1,18,18,3)+T('v',5,15,16)],
 ['Notas', `<g transform="rotate(-14 10 10)">${R('#e9e9e9',3,2,14,16)+P('M5 6l9 8M6 13l7-8M5 9h9','none','#888')}</g>`+P('M19 9l-6 8','none','#222',1.5)],
 ['Adium*', R('#1b4db0',1,0,18,7,2)+T('Ximen',2,6,6)+P('M7 9h11l-3 3 3 3-7 3z','#d07a3b')+P('M7 13l7-4 2 9H8z','#2d4a88')+C('#e2231a',4.5,15,3.5)],
 ['Growl*', P('M10 2q9 0 9 8t-9 8l-7 1 1-3Q1 13 1 10q0-8 9-8z','#edf1f3')+T('G!',4,14,11,'#9ec5dd')+C('#e2231a',16,3,3.3)],
 ['Twitter*', R('#efc51e')+P('M2 6l3-2q3 0 3 3 4 3 10 1l-3 4q-4 3-7 2-4-2-4-7zM9 13l1 5M12 13v4','#171206','#171206',.8)],
 ['Photoshop', R('#2876bd')+R('#4c9ee0',2,2,16,8)+T('Ps',4,14.5,11,'#08233f')],
];
define('dock-icon', `
<style>
:host{position:relative;display:block;width:21px;height:28px}
svg{margin:0 auto;-webkit-box-reflect:below -1px linear-gradient(transparent 50%,#0005)}
:host([running])::after{content:"";position:absolute;left:7px;bottom:1px;width:6px;height:5px;border-radius:50%;background:#fff;box-shadow:0 0 3px 1px #9fc9ff}
</style>
<svg width="20" height="20" viewBox="0 0 20 20"></svg>`,
(host, root) => { root.querySelector('svg').innerHTML = host.art; });

define('mac-dock', `
<style>
:host{position:relative;display:flex;justify-content:center;height:37px;overflow:hidden;
background:linear-gradient(#0008,transparent 40%),radial-gradient(ellipse 150px 34px at 17.500% 70%,#7d8685,transparent),linear-gradient(65deg,transparent 82%,#8d979777 84%,#9ca6a6cc 85.500%,transparent 87%),radial-gradient(ellipse 80px 90px at 78.500% 80%,#a3adad,transparent),radial-gradient(ellipse 90px 90px at 83.500% 60%,#9ba5a5,transparent),radial-gradient(ellipse 300px 50px at 47% 50%,#626969,transparent),linear-gradient(90deg,#303333,#434747 20%,#4a4f4f 78%,#2b2d2d 88%,#202222)}
.shelf{position:absolute;left:50%;bottom:0;width:1056px;margin-left:-528px}
.icons{position:relative;display:flex;padding:8px 0 0 5px}
.gap{width:12px}
</style>
<svg class="shelf" height="21" viewBox="0 0 1056 21"><path d="M10 0h1036l10 17H0z" fill="#b9bebe" opacity=".5"/><path d="M4 11h1048l4 6H0z" fill="#ddd" opacity=".2"/><path d="M0 17.500h1056" stroke="#666"/><path d="M0 18h1056v3H0z" fill="#dedadc"/></svg>
<div class="icons"></div>`,
(host, root) => {
  const row = root.querySelector('.icons');
  const add = (name, art) => {
    const el = document.createElement('dock-icon');
    el.art = art;
    el.setAttribute('aria-label', name.replace('*', ''));
    if (name.endsWith('*')) el.setAttribute('running', '');
    row.append(el);
  };
  dock.forEach(([n, a]) => add(n, a));
  const gap = document.createElement('span');
  gap.className = 'gap';
  row.append(gap);
  add('Ventana minimizada', R('#3b3f3f',1,5,18,10)+P('M2 7.500h16M2 10h16M2 12.500h16','none','#777',.8)+R('#f0c41d',12,13,6,6)+P('M13 16l4-1','none','#222',1.5));
  add('Papelera', P('M3 4h14l-2 15H5z','#7d8484','#c1c7c7')+'<ellipse cx="10" cy="4" rx="8" ry="3" fill="#4b5050" stroke="#d3d8d8"/><ellipse cx="10" cy="4" rx="5" ry="2.500" fill="#f1f1f1"/>'+P('M6 8l8 9M14 8l-8 9M10 7v12','none','#484d4d'));
});
</script>
</body>
</html>
